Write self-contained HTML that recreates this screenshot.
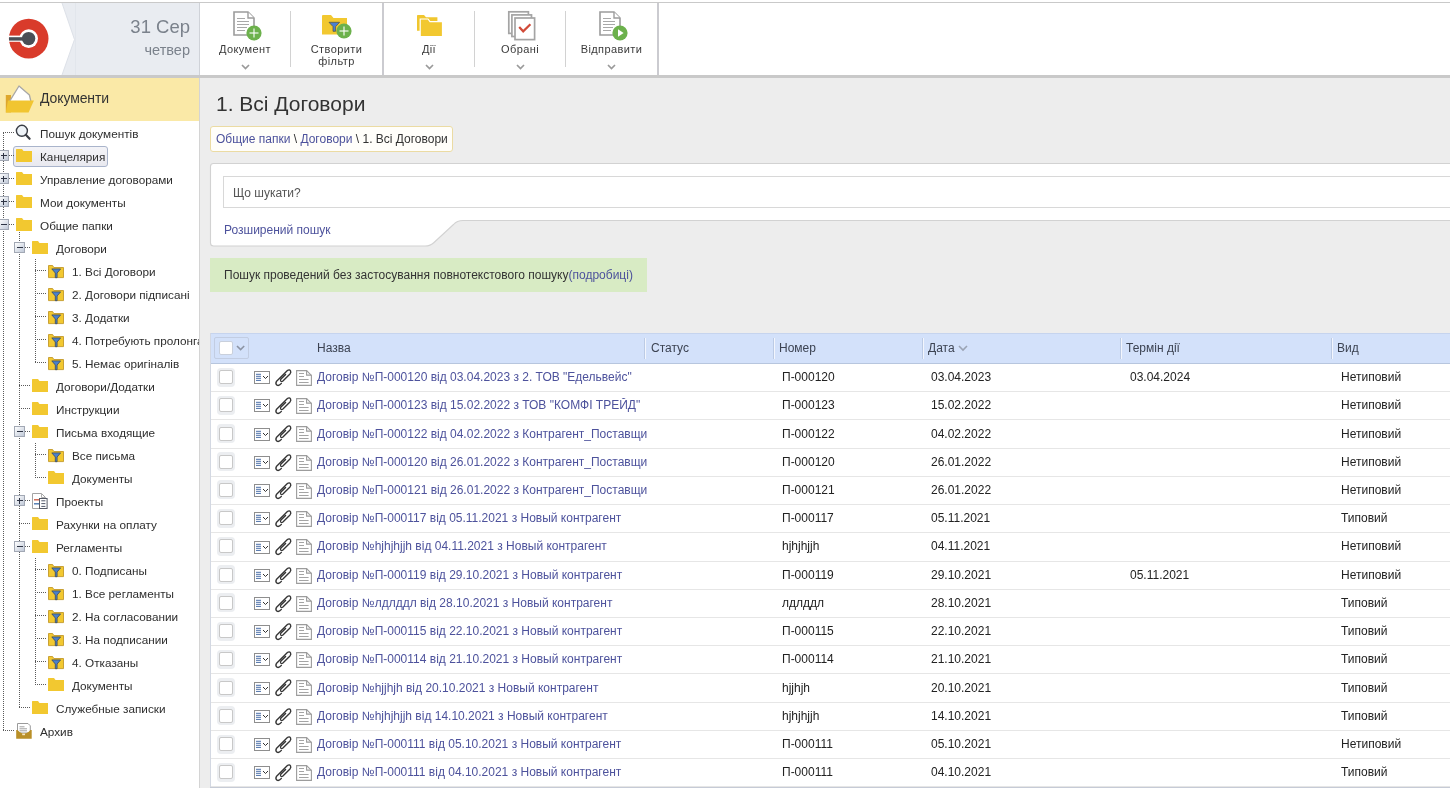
<!DOCTYPE html><html><head><meta charset="utf-8"><style>
*{box-sizing:border-box}
html,body{margin:0;padding:0}
body{width:1450px;height:788px;overflow:hidden;position:relative;background:#ededed;will-change:transform;font-family:"Liberation Sans",sans-serif;color:#333}
.a{position:absolute}
svg{position:absolute;overflow:visible}
.tb{position:absolute;font-size:11px;color:#3a3a3a;text-align:center;white-space:nowrap;line-height:12px;letter-spacing:0.4px}
.ti{position:absolute;font-size:11.75px;color:#2e2e2e;white-space:nowrap;line-height:14px}
.dv{position:absolute;width:1px;background-image:linear-gradient(#5a5a5a 50%,transparent 50%);background-size:1px 2px}
.dh{position:absolute;height:1px;background-image:linear-gradient(90deg,#5a5a5a 50%,transparent 50%);background-size:2px 1px}
.exp{position:absolute;width:11px;height:11px;border:1px solid #a2a8b4;background:linear-gradient(135deg,#ffffff,#c0c9d8);}
.exp:before{content:"";position:absolute;left:1.5px;top:3.8px;width:6px;height:1.4px;background:#2e3444}
.exp.p:after{content:"";position:absolute;left:3.8px;top:1.5px;width:1.4px;height:6px;background:#2e3444}

.c{position:absolute;font-size:12px;color:#222;white-space:nowrap;line-height:14px}
.hc{position:absolute;top:341px;font-size:12px;color:#3c4352;white-space:nowrap;line-height:14px}
.hs{position:absolute;top:338px;width:2px;height:21px;border-left:1px solid #bccbe5;border-right:1px solid #f3f6fd}
.link{color:#4d529c !important}
.rl{position:absolute;left:211px;width:1239px;height:1px;background:#e6e6e6}
</style></head><body>
<div class="a" style="left:0;top:0;width:1450px;height:78px;background:#fff"></div>
<div class="a" style="left:0;top:2px;width:1450px;height:1px;background:#c9c9c9"></div>
<svg style="left:0;top:3px" width="200" height="72"><polygon points="62,0 199,0 199,72 62,72 74.5,36.5" fill="#e9ecf1"/><polyline points="62,0 74.5,36.5 62,72" fill="none" stroke="#dde1e8" stroke-width="1"/><line x1="75.5" y1="0" x2="75.5" y2="72" stroke="#e2e6ec" stroke-width="1"/></svg>
<div class="a" style="left:199px;top:3px;width:1px;height:72px;background:#cfd2d8"></div>
<div class="a" style="right:1260px;top:17px;font-size:18.5px;line-height:20px;color:#7b828c;white-space:nowrap">31 Сер</div>
<div class="a" style="right:1260px;top:42px;font-size:14.5px;line-height:16px;color:#7b828c;white-space:nowrap">четвер</div>
<svg style="left:0;top:14px" width="56" height="50"><circle cx="28.7" cy="24.6" r="19.8" fill="#d93b2b"/><circle cx="28.7" cy="24.6" r="9.3" fill="#fff"/><rect x="9" y="21.6" width="13" height="6.2" fill="#fff"/><rect x="9" y="23.2" width="15" height="3.4" fill="#4b4f56"/><circle cx="28.6" cy="24.6" r="6.7" fill="#4b4f56"/></svg>
<div class="a" style="left:290px;top:11px;width:1px;height:56px;background:#d2d2d2"></div>
<div class="a" style="left:474px;top:11px;width:1px;height:56px;background:#d2d2d2"></div>
<div class="a" style="left:565px;top:11px;width:1px;height:56px;background:#d2d2d2"></div>
<div class="a" style="left:382px;top:3px;width:2px;height:72px;background:#cbcbd0"></div>
<div class="a" style="left:657px;top:3px;width:2px;height:72px;background:#cbcbd0"></div>
<div class="a" style="left:0;top:75px;width:1450px;height:3px;background:#c9c9c9"></div>
<svg style="left:233px;top:10.5px" width="24" height="26"><path d="M1,1 H15 L21,7 V24 H1 Z" fill="#fff" stroke="#9c9c9c" stroke-width="1.6" stroke-linejoin="miter"/><path d="M15,1 V7 H21" fill="#fff" stroke="#9c9c9c" stroke-width="1.4"/><line x1="4" y1="7.5" x2="12" y2="7.5" stroke="#a8a8a8" stroke-width="1"/><line x1="4" y1="10.5" x2="16" y2="10.5" stroke="#a8a8a8" stroke-width="1"/><line x1="4" y1="13.5" x2="16" y2="13.5" stroke="#a8a8a8" stroke-width="1"/><line x1="4" y1="16.5" x2="14" y2="16.5" stroke="#a8a8a8" stroke-width="1"/><line x1="4" y1="19.5" x2="12" y2="19.5" stroke="#a8a8a8" stroke-width="1"/></svg>
<svg style="left:246.4px;top:25.2px" width="16" height="16"><circle cx="8" cy="8" r="7.6" fill="#6cb14c"/><line x1="8" y1="3.5" x2="8" y2="12.5" stroke="#fff" stroke-width="1.1"/><line x1="3.5" y1="8" x2="12.5" y2="8" stroke="#fff" stroke-width="1.1"/></svg>
<div class="tb" style="left:200px;width:90px;top:43.2px">Документ</div>
<svg style="left:241px;top:63.7px" width="10" height="6"><polyline points="1,1 4.5,4.5 8,1" fill="none" stroke="#9a9a9a" stroke-width="1.7"/></svg>
<svg style="left:322px;top:15px" width="26" height="20"><path d="M0,1 Q0,0 1,0 H9 L11.5,3 H25 V19.6 H0 Z" fill="#f2c830"/><path d="M7,7.3 H17.6 L13.6,11.6 V16.3 L11,16.3 V11.6 Z" fill="#4a7fd2" stroke="#5a5a40" stroke-width="0.8"/></svg>
<svg style="left:336.4px;top:23.1px" width="16" height="16"><circle cx="8" cy="8" r="7.6" fill="#6cb14c"/><line x1="8" y1="3.5" x2="8" y2="12.5" stroke="#fff" stroke-width="1.1"/><line x1="3.5" y1="8" x2="12.5" y2="8" stroke="#fff" stroke-width="1.1"/></svg>
<div class="tb" style="left:291px;width:91px;top:43.2px">Створити<br>фільтр</div>
<svg style="left:417px;top:15px" width="26" height="22"><path d="M0,0.5 Q0,0 1,0 H7 L9,2.2 H20.4 V15.8 H0 Z" fill="#f0c62e"/><path d="M3.2,4 H11 L13,6.6 H25.5 V21.6 H3.2 Z" fill="#f2c830" stroke="#fff" stroke-width="1.2"/></svg>
<div class="tb" style="left:384px;width:90px;top:43.2px">Дії</div>
<svg style="left:424.5px;top:63.7px" width="10" height="6"><polyline points="1,1 4.5,4.5 8,1" fill="none" stroke="#9a9a9a" stroke-width="1.7"/></svg>
<svg style="left:507px;top:10px" width="30" height="31"><rect x="1.8" y="1.8" width="19.6" height="21.6" fill="#fff" stroke="#a4a4a4" stroke-width="1.7"/><rect x="4.9" y="4.9" width="19.6" height="21.6" fill="#fff" stroke="#a4a4a4" stroke-width="1.7"/><rect x="8" y="8" width="19.6" height="21.6" fill="#fff" stroke="#a4a4a4" stroke-width="1.7"/><polyline points="12.2,17 16.2,21.3 23.4,14.2" fill="none" stroke="#d14a38" stroke-width="2.2"/></svg>
<div class="tb" style="left:475px;width:90px;top:43.2px">Обрані</div>
<svg style="left:515.5px;top:63.7px" width="10" height="6"><polyline points="1,1 4.5,4.5 8,1" fill="none" stroke="#9a9a9a" stroke-width="1.7"/></svg>
<svg style="left:599px;top:10.5px" width="24" height="26"><path d="M1,1 H15 L21,7 V24 H1 Z" fill="#fff" stroke="#9c9c9c" stroke-width="1.6" stroke-linejoin="miter"/><path d="M15,1 V7 H21" fill="#fff" stroke="#9c9c9c" stroke-width="1.4"/><line x1="4" y1="7.5" x2="12" y2="7.5" stroke="#a8a8a8" stroke-width="1"/><line x1="4" y1="10.5" x2="16" y2="10.5" stroke="#a8a8a8" stroke-width="1"/><line x1="4" y1="13.5" x2="16" y2="13.5" stroke="#a8a8a8" stroke-width="1"/><line x1="4" y1="16.5" x2="14" y2="16.5" stroke="#a8a8a8" stroke-width="1"/><line x1="4" y1="19.5" x2="12" y2="19.5" stroke="#a8a8a8" stroke-width="1"/></svg>
<svg style="left:612.2px;top:25.2px" width="16" height="16"><circle cx="8" cy="8" r="7.6" fill="#6cb14c"/><polygon points="6,4.2 11.6,8 6,11.8" fill="#fff"/></svg>
<div class="tb" style="left:566px;width:91px;top:43.2px">Відправити</div>
<svg style="left:606.5px;top:63.7px" width="10" height="6"><polyline points="1,1 4.5,4.5 8,1" fill="none" stroke="#9a9a9a" stroke-width="1.7"/></svg>
<div class="a" style="left:0;top:78px;width:199px;height:710px;background:#fff"></div>
<div class="a" style="left:199px;top:78px;width:1px;height:710px;background:#d4d4d4"></div>
<div class="a" style="left:0;top:78px;width:199px;height:43px;background:#fae9a7"></div>
<svg style="left:0;top:78px" width="40" height="43"><path d="M5.8,17 H11 V34.4 H5.8 Z" fill="#dea72c"/><path d="M8.3,25.3 L19,8 L29.4,17 L30.8,23 L28,30 L9,30 Z" fill="#fff" stroke="#a7a7a7" stroke-width="1.3" stroke-linejoin="round"/><path d="M7.9,22.4 H33.9 L28.6,34.4 H5.8 Z" fill="#f1c531"/></svg>
<div class="a" style="left:40px;top:90px;font-size:14px;line-height:16px;color:#333;white-space:nowrap;letter-spacing:-0.1px">Документи</div>
<div class="a" style="left:0;top:121px;width:199px;height:667px;overflow:hidden">
<div class="dv" style="left:3px;top:12px;height:598px"></div>
<div class="dv" style="left:19px;top:109px;height:478px"></div>
<div class="dv" style="left:35px;top:138px;height:104px"></div>
<div class="dv" style="left:35px;top:322px;height:35px"></div>
<div class="dv" style="left:35px;top:437px;height:127px"></div>
<div class="a" style="left:13px;top:25px;width:95px;height:21px;border:1px solid #a9b4cb;border-radius:3px;background:linear-gradient(#f3f3f7,#e9e9ef)"></div>
<div class="dh" style="left:3px;top:11px;width:11px"></div>
<svg style="left:15px;top:3px" width="18" height="18"><circle cx="6.9" cy="6.8" r="5.5" fill="#eef3f8" stroke="#3a3e46" stroke-width="1.4"/><line x1="10.8" y1="10.8" x2="14.6" y2="14.8" stroke="#3a3e46" stroke-width="2.2" stroke-linecap="round"/></svg>
<div class="ti" style="left:40px;top:5.8px">Пошук документів</div>
<div class="dh" style="left:3px;top:34px;width:11px"></div>
<svg style="left:16px;top:28px" width="17" height="14"><path d="M0,0.6 Q0,0 0.6,0 H6 L7.5,2 H16 V13 H0 Z" fill="#f2c830"/></svg>
<div class="exp p" style="left:-2px;top:29px"></div>
<div class="ti" style="left:40px;top:28.8px">Канцелярия</div>
<div class="dh" style="left:3px;top:57px;width:11px"></div>
<svg style="left:16px;top:51px" width="17" height="14"><path d="M0,0.6 Q0,0 0.6,0 H6 L7.5,2 H16 V13 H0 Z" fill="#f2c830"/></svg>
<div class="exp p" style="left:-2px;top:52px"></div>
<div class="ti" style="left:40px;top:51.8px">Управление договорами</div>
<div class="dh" style="left:3px;top:80px;width:11px"></div>
<svg style="left:16px;top:74px" width="17" height="14"><path d="M0,0.6 Q0,0 0.6,0 H6 L7.5,2 H16 V13 H0 Z" fill="#f2c830"/></svg>
<div class="exp p" style="left:-2px;top:75px"></div>
<div class="ti" style="left:40px;top:74.8px">Мои документы</div>
<div class="dh" style="left:3px;top:103px;width:11px"></div>
<svg style="left:16px;top:97px" width="17" height="14"><path d="M0,0.6 Q0,0 0.6,0 H6 L7.5,2 H16 V13 H0 Z" fill="#f2c830"/></svg>
<div class="exp m" style="left:-2px;top:98px"></div>
<div class="ti" style="left:40px;top:97.8px">Общие папки</div>
<div class="dh" style="left:19px;top:126px;width:11px"></div>
<svg style="left:32px;top:120px" width="17" height="14"><path d="M0,0.6 Q0,0 0.6,0 H6 L7.5,2 H16 V13 H0 Z" fill="#f2c830"/></svg>
<div class="exp m" style="left:14px;top:121px"></div>
<div class="ti" style="left:56px;top:120.8px">Договори</div>
<div class="dh" style="left:35px;top:149px;width:11px"></div>
<svg style="left:48px;top:143.5px" width="17" height="14"><path d="M0.5,0.5 H4.6 L5.8,2.5 H15.5 V12.6 H0.5 Z" fill="#f2c830" stroke="#c39a2a" stroke-width="0.9"/><path d="M3.8,3.9 H12.6 L9.1,8 V12.7 H7.3 V8 Z" fill="#4a80cc" stroke="#3c4a5a" stroke-width="0.8" stroke-linejoin="round"/></svg>
<div class="ti" style="left:72px;top:143.8px">1. Всі Договори</div>
<div class="dh" style="left:35px;top:172px;width:11px"></div>
<svg style="left:48px;top:166.5px" width="17" height="14"><path d="M0.5,0.5 H4.6 L5.8,2.5 H15.5 V12.6 H0.5 Z" fill="#f2c830" stroke="#c39a2a" stroke-width="0.9"/><path d="M3.8,3.9 H12.6 L9.1,8 V12.7 H7.3 V8 Z" fill="#4a80cc" stroke="#3c4a5a" stroke-width="0.8" stroke-linejoin="round"/></svg>
<div class="ti" style="left:72px;top:166.8px">2. Договори підписані</div>
<div class="dh" style="left:35px;top:195px;width:11px"></div>
<svg style="left:48px;top:189.5px" width="17" height="14"><path d="M0.5,0.5 H4.6 L5.8,2.5 H15.5 V12.6 H0.5 Z" fill="#f2c830" stroke="#c39a2a" stroke-width="0.9"/><path d="M3.8,3.9 H12.6 L9.1,8 V12.7 H7.3 V8 Z" fill="#4a80cc" stroke="#3c4a5a" stroke-width="0.8" stroke-linejoin="round"/></svg>
<div class="ti" style="left:72px;top:189.8px">3. Додатки</div>
<div class="dh" style="left:35px;top:218px;width:11px"></div>
<svg style="left:48px;top:212.5px" width="17" height="14"><path d="M0.5,0.5 H4.6 L5.8,2.5 H15.5 V12.6 H0.5 Z" fill="#f2c830" stroke="#c39a2a" stroke-width="0.9"/><path d="M3.8,3.9 H12.6 L9.1,8 V12.7 H7.3 V8 Z" fill="#4a80cc" stroke="#3c4a5a" stroke-width="0.8" stroke-linejoin="round"/></svg>
<div class="ti" style="left:72px;top:212.8px">4. Потребують пролонгації</div>
<div class="dh" style="left:35px;top:241px;width:11px"></div>
<svg style="left:48px;top:235.5px" width="17" height="14"><path d="M0.5,0.5 H4.6 L5.8,2.5 H15.5 V12.6 H0.5 Z" fill="#f2c830" stroke="#c39a2a" stroke-width="0.9"/><path d="M3.8,3.9 H12.6 L9.1,8 V12.7 H7.3 V8 Z" fill="#4a80cc" stroke="#3c4a5a" stroke-width="0.8" stroke-linejoin="round"/></svg>
<div class="ti" style="left:72px;top:235.8px">5. Немає оригіналів</div>
<div class="dh" style="left:19px;top:264px;width:11px"></div>
<svg style="left:32px;top:258px" width="17" height="14"><path d="M0,0.6 Q0,0 0.6,0 H6 L7.5,2 H16 V13 H0 Z" fill="#f2c830"/></svg>
<div class="ti" style="left:56px;top:258.8px">Договори/Додатки</div>
<div class="dh" style="left:19px;top:287px;width:11px"></div>
<svg style="left:32px;top:281px" width="17" height="14"><path d="M0,0.6 Q0,0 0.6,0 H6 L7.5,2 H16 V13 H0 Z" fill="#f2c830"/></svg>
<div class="ti" style="left:56px;top:281.8px">Инструкции</div>
<div class="dh" style="left:19px;top:310px;width:11px"></div>
<svg style="left:32px;top:304px" width="17" height="14"><path d="M0,0.6 Q0,0 0.6,0 H6 L7.5,2 H16 V13 H0 Z" fill="#f2c830"/></svg>
<div class="exp m" style="left:14px;top:305px"></div>
<div class="ti" style="left:56px;top:304.8px">Письма входящие</div>
<div class="dh" style="left:35px;top:333px;width:11px"></div>
<svg style="left:48px;top:327.5px" width="17" height="14"><path d="M0.5,0.5 H4.6 L5.8,2.5 H15.5 V12.6 H0.5 Z" fill="#f2c830" stroke="#c39a2a" stroke-width="0.9"/><path d="M3.8,3.9 H12.6 L9.1,8 V12.7 H7.3 V8 Z" fill="#4a80cc" stroke="#3c4a5a" stroke-width="0.8" stroke-linejoin="round"/></svg>
<div class="ti" style="left:72px;top:327.8px">Все письма</div>
<div class="dh" style="left:35px;top:356px;width:11px"></div>
<svg style="left:48px;top:350px" width="17" height="14"><path d="M0,0.6 Q0,0 0.6,0 H6 L7.5,2 H16 V13 H0 Z" fill="#f2c830"/></svg>
<div class="ti" style="left:72px;top:350.8px">Документы</div>
<div class="dh" style="left:19px;top:379px;width:11px"></div>
<svg style="left:32px;top:372px" width="17" height="17"><path d="M0.5,0.5 H9.5 L13.5,4.5 V15.5 H0.5 Z" fill="#fff" stroke="#a4a4a4" stroke-width="1"/><path d="M9.5,0.5 V4.5 H13.5" fill="none" stroke="#b0b0b0"/><line x1="2" y1="6.8" x2="7" y2="6.8" stroke="#d0604a" stroke-width="1.4"/><line x1="2" y1="10.8" x2="7" y2="10.8" stroke="#4a78b0" stroke-width="1.4"/><rect x="7.5" y="5.5" width="7.6" height="10" fill="#fff" stroke="#555a66" stroke-width="1"/><line x1="9.3" y1="7.8" x2="13.4" y2="7.8" stroke="#505868"/><line x1="9.3" y1="10.6" x2="13.4" y2="10.6" stroke="#505868"/><line x1="9.3" y1="13.4" x2="13.4" y2="13.4" stroke="#505868"/></svg>
<div class="exp p" style="left:14px;top:374px"></div>
<div class="ti" style="left:56px;top:373.8px">Проекты</div>
<div class="dh" style="left:19px;top:402px;width:11px"></div>
<svg style="left:32px;top:396px" width="17" height="14"><path d="M0,0.6 Q0,0 0.6,0 H6 L7.5,2 H16 V13 H0 Z" fill="#f2c830"/></svg>
<div class="ti" style="left:56px;top:396.8px">Рахунки на оплату</div>
<div class="dh" style="left:19px;top:425px;width:11px"></div>
<svg style="left:32px;top:419px" width="17" height="14"><path d="M0,0.6 Q0,0 0.6,0 H6 L7.5,2 H16 V13 H0 Z" fill="#f2c830"/></svg>
<div class="exp m" style="left:14px;top:420px"></div>
<div class="ti" style="left:56px;top:419.8px">Регламенты</div>
<div class="dh" style="left:35px;top:448px;width:11px"></div>
<svg style="left:48px;top:442.5px" width="17" height="14"><path d="M0.5,0.5 H4.6 L5.8,2.5 H15.5 V12.6 H0.5 Z" fill="#f2c830" stroke="#c39a2a" stroke-width="0.9"/><path d="M3.8,3.9 H12.6 L9.1,8 V12.7 H7.3 V8 Z" fill="#4a80cc" stroke="#3c4a5a" stroke-width="0.8" stroke-linejoin="round"/></svg>
<div class="ti" style="left:72px;top:442.8px">0. Подписаны</div>
<div class="dh" style="left:35px;top:471px;width:11px"></div>
<svg style="left:48px;top:465.5px" width="17" height="14"><path d="M0.5,0.5 H4.6 L5.8,2.5 H15.5 V12.6 H0.5 Z" fill="#f2c830" stroke="#c39a2a" stroke-width="0.9"/><path d="M3.8,3.9 H12.6 L9.1,8 V12.7 H7.3 V8 Z" fill="#4a80cc" stroke="#3c4a5a" stroke-width="0.8" stroke-linejoin="round"/></svg>
<div class="ti" style="left:72px;top:465.8px">1. Все регламенты</div>
<div class="dh" style="left:35px;top:494px;width:11px"></div>
<svg style="left:48px;top:488.5px" width="17" height="14"><path d="M0.5,0.5 H4.6 L5.8,2.5 H15.5 V12.6 H0.5 Z" fill="#f2c830" stroke="#c39a2a" stroke-width="0.9"/><path d="M3.8,3.9 H12.6 L9.1,8 V12.7 H7.3 V8 Z" fill="#4a80cc" stroke="#3c4a5a" stroke-width="0.8" stroke-linejoin="round"/></svg>
<div class="ti" style="left:72px;top:488.8px">2. На согласовании</div>
<div class="dh" style="left:35px;top:517px;width:11px"></div>
<svg style="left:48px;top:511.5px" width="17" height="14"><path d="M0.5,0.5 H4.6 L5.8,2.5 H15.5 V12.6 H0.5 Z" fill="#f2c830" stroke="#c39a2a" stroke-width="0.9"/><path d="M3.8,3.9 H12.6 L9.1,8 V12.7 H7.3 V8 Z" fill="#4a80cc" stroke="#3c4a5a" stroke-width="0.8" stroke-linejoin="round"/></svg>
<div class="ti" style="left:72px;top:511.8px">3. На подписании</div>
<div class="dh" style="left:35px;top:540px;width:11px"></div>
<svg style="left:48px;top:534.5px" width="17" height="14"><path d="M0.5,0.5 H4.6 L5.8,2.5 H15.5 V12.6 H0.5 Z" fill="#f2c830" stroke="#c39a2a" stroke-width="0.9"/><path d="M3.8,3.9 H12.6 L9.1,8 V12.7 H7.3 V8 Z" fill="#4a80cc" stroke="#3c4a5a" stroke-width="0.8" stroke-linejoin="round"/></svg>
<div class="ti" style="left:72px;top:534.8px">4. Отказаны</div>
<div class="dh" style="left:35px;top:563px;width:11px"></div>
<svg style="left:48px;top:557px" width="17" height="14"><path d="M0,0.6 Q0,0 0.6,0 H6 L7.5,2 H16 V13 H0 Z" fill="#f2c830"/></svg>
<div class="ti" style="left:72px;top:557.8px">Документы</div>
<div class="dh" style="left:19px;top:586px;width:11px"></div>
<svg style="left:32px;top:580px" width="17" height="14"><path d="M0,0.6 Q0,0 0.6,0 H6 L7.5,2 H16 V13 H0 Z" fill="#f2c830"/></svg>
<div class="ti" style="left:56px;top:580.8px">Служебные записки</div>
<div class="dh" style="left:3px;top:609px;width:11px"></div>
<svg style="left:16px;top:602px" width="17" height="17"><path d="M1.5,0.5 H12 L14.3,2.8 V10 H1.5 Z" fill="#fff" stroke="#9a9a9a" stroke-width="1"/><line x1="3.5" y1="3.8" x2="8.5" y2="3.8" stroke="#a0a0a0"/><line x1="3.5" y1="5.8" x2="11" y2="5.8" stroke="#a0a0a0"/><line x1="3.5" y1="7.8" x2="11" y2="7.8" stroke="#a0a0a0"/><path d="M0.2,6.9 H1.6 Q4,10 6,10.2 H10 Q12,10 14.4,6.9 H15.7 V15.7 H0.2 Z" fill="#b98f27"/><rect x="6.2" y="10.6" width="2.8" height="1.6" fill="#f5e7c0"/></svg>
<div class="ti" style="left:40px;top:603.8px">Архив</div>
</div>
<div class="a" style="left:216px;top:92px;font-size:21px;line-height:24px;color:#333;white-space:nowrap">1. Всі Договори</div>
<div class="a" style="left:210px;top:126px;width:243px;height:26px;background:#fffefa;border:1px solid #ebdba3;border-radius:3px;font-size:12px;line-height:14px;white-space:nowrap;padding:5px 0 0 5px;color:#333"><span class="link">Общие папки</span> \ <span class="link">Договори</span> \ 1. Всі Договори</div>
<svg style="left:210px;top:163px" width="1240" height="84"><path d="M0.5,3.5 Q0.5,0.5 3.5,0.5 H1250 V57.5 H253 Q247,57.5 243.5,61.5 L224,79.5 Q220.5,83 215,83 H3.5 Q0.5,83 0.5,80 Z" fill="#fff" stroke="#d2d2d2" stroke-width="1.1"/></svg>
<div class="a" style="left:223px;top:176px;width:1227px;height:32px;background:#fff;border:1px solid #d8d8d8;border-right:none;width:1240px"></div>
<div class="a" style="left:233px;top:186px;font-size:12px;line-height:14px;color:#555;white-space:nowrap">Що шукати?</div>
<div class="a" style="left:224px;top:223px;font-size:12px;line-height:14px;white-space:nowrap" ><span class="link">Розширений пошук</span></div>
<div class="a" style="left:210px;top:258px;width:437px;height:34px;background:#d8ebc4;font-size:12px;line-height:14px;white-space:nowrap;padding:10px 0 0 14px;color:#333">Пошук проведений без застосування повнотекстового пошуку<span class="link">(подробиці)</span></div>
<div class="a" style="left:210px;top:333px;width:1240px;height:455px;background:#fff;border-left:1px solid #d3d8e2"></div>
<div class="a" style="left:210px;top:787px;width:1240px;height:1px;background:#c6cbd6"></div>
<div class="a" style="left:211px;top:333px;width:1239px;height:31px;background:#d3e1fa;border-top:1px solid #c6d4ee;border-bottom:1px solid #b7c6de"></div>
<div class="a" style="left:214px;top:337px;width:35px;height:22px;border:1px solid #c2cde2;border-radius:2px;background:#d3e1fa"></div>
<div class="a" style="left:219px;top:341px;width:14px;height:14px;background:#fff;border-radius:2px;border:1px solid #c9d0dc"></div>
<svg style="left:236px;top:345px" width="10" height="6"><polyline points="1,1 4.6,4.6 8.2,1" fill="none" stroke="#8c94a4" stroke-width="1.6"/></svg>
<div class="hs" style="left:644px"></div>
<div class="hs" style="left:773px"></div>
<div class="hs" style="left:922px"></div>
<div class="hs" style="left:1120px"></div>
<div class="hs" style="left:1331px"></div>
<div class="hc" style="left:317px">Назва</div>
<div class="hc" style="left:651px">Статус</div>
<div class="hc" style="left:779px">Номер</div>
<div class="hc" style="left:928px">Дата</div>
<div class="hc" style="left:1126px">Термін дії</div>
<div class="hc" style="left:1337px">Вид</div>
<svg style="left:958px;top:345px" width="10" height="6"><polyline points="1,1 5,5 9,1" fill="none" stroke="#9aa3b3" stroke-width="1.6"/></svg>
<div class="rl" style="top:391.18px"></div>
<div class="a" style="left:217px;top:367.56px;width:18px;height:19px;border-radius:4px;background:#eceef1"></div>
<div class="a" style="left:219px;top:370.06px;width:14px;height:14px;border-radius:2px;background:#fff;border:1px solid #c8c8c8"></div>
<svg style="left:254px;top:371.15px" width="16" height="13"><rect x="0.5" y="0.5" width="15" height="12" fill="#fff" stroke="#8e8e8e" stroke-width="1"/><line x1="2" y1="3.3" x2="7" y2="3.3" stroke="#4a6fa8" stroke-width="1"/><line x1="2" y1="5.3" x2="7" y2="5.3" stroke="#4a6fa8" stroke-width="1"/><line x1="2" y1="7.3" x2="7" y2="7.3" stroke="#4a6fa8" stroke-width="1"/><line x1="2" y1="9.4" x2="7" y2="9.4" stroke="#4a6fa8" stroke-width="1"/><polyline points="9,5 11.5,7.5 14,5" fill="none" stroke="#333" stroke-width="1"/></svg>
<svg style="left:272px;top:365.95px" width="22" height="22"><path d="M9.4,17.4 Q7,20.2 5,19.2 Q3,17.8 4.6,15.2 L15.4,4.6 Q17.3,3 18.5,4.8 Q19.3,6.4 18,7.9 L10.9,15 Q9.5,16.2 8.7,15 Q8.2,13.9 9,13 L13.6,8.4" fill="none" stroke="#353535" stroke-width="1.35" stroke-linecap="round" stroke-linejoin="round"/></svg>
<svg style="left:296px;top:369.95px" width="17" height="17"><path d="M0.6,0.6 H10.6 L15.4,5.4 V15.4 H0.6 Z" fill="#fff" stroke="#9c9c9c" stroke-width="1.1"/><path d="M10.6,0.6 V5.1 H15.4" fill="none" stroke="#9c9c9c" stroke-width="1.1"/><line x1="3" y1="3.5" x2="8" y2="3.5" stroke="#a4a4a4"/><line x1="3" y1="6.5" x2="8" y2="6.5" stroke="#a4a4a4"/><line x1="3" y1="9.5" x2="12.6" y2="9.5" stroke="#a4a4a4"/><line x1="3" y1="12.5" x2="12.6" y2="12.5" stroke="#a4a4a4"/></svg>
<div class="c link" style="left:317px;top:370.06px;width:330px;overflow:hidden">Договір №П-000120 від 03.04.2023 з 2. ТОВ "Едельвейс"</div>
<div class="c" style="left:782px;top:370.06px">П-000120</div>
<div class="c" style="left:931px;top:370.06px">03.04.2023</div>
<div class="c" style="left:1130px;top:370.06px">03.04.2024</div>
<div class="c" style="left:1341px;top:370.06px">Нетиповий</div>
<div class="rl" style="top:419.41px"></div>
<div class="a" style="left:217px;top:395.80px;width:18px;height:19px;border-radius:4px;background:#eceef1"></div>
<div class="a" style="left:219px;top:398.30px;width:14px;height:14px;border-radius:2px;background:#fff;border:1px solid #c8c8c8"></div>
<svg style="left:254px;top:399.38px" width="16" height="13"><rect x="0.5" y="0.5" width="15" height="12" fill="#fff" stroke="#8e8e8e" stroke-width="1"/><line x1="2" y1="3.3" x2="7" y2="3.3" stroke="#4a6fa8" stroke-width="1"/><line x1="2" y1="5.3" x2="7" y2="5.3" stroke="#4a6fa8" stroke-width="1"/><line x1="2" y1="7.3" x2="7" y2="7.3" stroke="#4a6fa8" stroke-width="1"/><line x1="2" y1="9.4" x2="7" y2="9.4" stroke="#4a6fa8" stroke-width="1"/><polyline points="9,5 11.5,7.5 14,5" fill="none" stroke="#333" stroke-width="1"/></svg>
<svg style="left:272px;top:394.18px" width="22" height="22"><path d="M9.4,17.4 Q7,20.2 5,19.2 Q3,17.8 4.6,15.2 L15.4,4.6 Q17.3,3 18.5,4.8 Q19.3,6.4 18,7.9 L10.9,15 Q9.5,16.2 8.7,15 Q8.2,13.9 9,13 L13.6,8.4" fill="none" stroke="#353535" stroke-width="1.35" stroke-linecap="round" stroke-linejoin="round"/></svg>
<svg style="left:296px;top:398.18px" width="17" height="17"><path d="M0.6,0.6 H10.6 L15.4,5.4 V15.4 H0.6 Z" fill="#fff" stroke="#9c9c9c" stroke-width="1.1"/><path d="M10.6,0.6 V5.1 H15.4" fill="none" stroke="#9c9c9c" stroke-width="1.1"/><line x1="3" y1="3.5" x2="8" y2="3.5" stroke="#a4a4a4"/><line x1="3" y1="6.5" x2="8" y2="6.5" stroke="#a4a4a4"/><line x1="3" y1="9.5" x2="12.6" y2="9.5" stroke="#a4a4a4"/><line x1="3" y1="12.5" x2="12.6" y2="12.5" stroke="#a4a4a4"/></svg>
<div class="c link" style="left:317px;top:398.30px;width:330px;overflow:hidden">Договір №П-000123 від 15.02.2022 з ТОВ "КОМФІ ТРЕЙД"</div>
<div class="c" style="left:782px;top:398.30px">П-000123</div>
<div class="c" style="left:931px;top:398.30px">15.02.2022</div>
<div class="c" style="left:1341px;top:398.30px">Нетиповий</div>
<div class="rl" style="top:447.64px"></div>
<div class="a" style="left:217px;top:424.02px;width:18px;height:19px;border-radius:4px;background:#eceef1"></div>
<div class="a" style="left:219px;top:426.52px;width:14px;height:14px;border-radius:2px;background:#fff;border:1px solid #c8c8c8"></div>
<svg style="left:254px;top:427.61px" width="16" height="13"><rect x="0.5" y="0.5" width="15" height="12" fill="#fff" stroke="#8e8e8e" stroke-width="1"/><line x1="2" y1="3.3" x2="7" y2="3.3" stroke="#4a6fa8" stroke-width="1"/><line x1="2" y1="5.3" x2="7" y2="5.3" stroke="#4a6fa8" stroke-width="1"/><line x1="2" y1="7.3" x2="7" y2="7.3" stroke="#4a6fa8" stroke-width="1"/><line x1="2" y1="9.4" x2="7" y2="9.4" stroke="#4a6fa8" stroke-width="1"/><polyline points="9,5 11.5,7.5 14,5" fill="none" stroke="#333" stroke-width="1"/></svg>
<svg style="left:272px;top:422.41px" width="22" height="22"><path d="M9.4,17.4 Q7,20.2 5,19.2 Q3,17.8 4.6,15.2 L15.4,4.6 Q17.3,3 18.5,4.8 Q19.3,6.4 18,7.9 L10.9,15 Q9.5,16.2 8.7,15 Q8.2,13.9 9,13 L13.6,8.4" fill="none" stroke="#353535" stroke-width="1.35" stroke-linecap="round" stroke-linejoin="round"/></svg>
<svg style="left:296px;top:426.41px" width="17" height="17"><path d="M0.6,0.6 H10.6 L15.4,5.4 V15.4 H0.6 Z" fill="#fff" stroke="#9c9c9c" stroke-width="1.1"/><path d="M10.6,0.6 V5.1 H15.4" fill="none" stroke="#9c9c9c" stroke-width="1.1"/><line x1="3" y1="3.5" x2="8" y2="3.5" stroke="#a4a4a4"/><line x1="3" y1="6.5" x2="8" y2="6.5" stroke="#a4a4a4"/><line x1="3" y1="9.5" x2="12.6" y2="9.5" stroke="#a4a4a4"/><line x1="3" y1="12.5" x2="12.6" y2="12.5" stroke="#a4a4a4"/></svg>
<div class="c link" style="left:317px;top:426.52px;width:330px;overflow:hidden">Договір №П-000122 від 04.02.2022 з Контрагент_Поставщик</div>
<div class="c" style="left:782px;top:426.52px">П-000122</div>
<div class="c" style="left:931px;top:426.52px">04.02.2022</div>
<div class="c" style="left:1341px;top:426.52px">Нетиповий</div>
<div class="rl" style="top:475.87px"></div>
<div class="a" style="left:217px;top:452.25px;width:18px;height:19px;border-radius:4px;background:#eceef1"></div>
<div class="a" style="left:219px;top:454.75px;width:14px;height:14px;border-radius:2px;background:#fff;border:1px solid #c8c8c8"></div>
<svg style="left:254px;top:455.84px" width="16" height="13"><rect x="0.5" y="0.5" width="15" height="12" fill="#fff" stroke="#8e8e8e" stroke-width="1"/><line x1="2" y1="3.3" x2="7" y2="3.3" stroke="#4a6fa8" stroke-width="1"/><line x1="2" y1="5.3" x2="7" y2="5.3" stroke="#4a6fa8" stroke-width="1"/><line x1="2" y1="7.3" x2="7" y2="7.3" stroke="#4a6fa8" stroke-width="1"/><line x1="2" y1="9.4" x2="7" y2="9.4" stroke="#4a6fa8" stroke-width="1"/><polyline points="9,5 11.5,7.5 14,5" fill="none" stroke="#333" stroke-width="1"/></svg>
<svg style="left:272px;top:450.64px" width="22" height="22"><path d="M9.4,17.4 Q7,20.2 5,19.2 Q3,17.8 4.6,15.2 L15.4,4.6 Q17.3,3 18.5,4.8 Q19.3,6.4 18,7.9 L10.9,15 Q9.5,16.2 8.7,15 Q8.2,13.9 9,13 L13.6,8.4" fill="none" stroke="#353535" stroke-width="1.35" stroke-linecap="round" stroke-linejoin="round"/></svg>
<svg style="left:296px;top:454.64px" width="17" height="17"><path d="M0.6,0.6 H10.6 L15.4,5.4 V15.4 H0.6 Z" fill="#fff" stroke="#9c9c9c" stroke-width="1.1"/><path d="M10.6,0.6 V5.1 H15.4" fill="none" stroke="#9c9c9c" stroke-width="1.1"/><line x1="3" y1="3.5" x2="8" y2="3.5" stroke="#a4a4a4"/><line x1="3" y1="6.5" x2="8" y2="6.5" stroke="#a4a4a4"/><line x1="3" y1="9.5" x2="12.6" y2="9.5" stroke="#a4a4a4"/><line x1="3" y1="12.5" x2="12.6" y2="12.5" stroke="#a4a4a4"/></svg>
<div class="c link" style="left:317px;top:454.75px;width:330px;overflow:hidden">Договір №П-000120 від 26.01.2022 з Контрагент_Поставщик</div>
<div class="c" style="left:782px;top:454.75px">П-000120</div>
<div class="c" style="left:931px;top:454.75px">26.01.2022</div>
<div class="c" style="left:1341px;top:454.75px">Нетиповий</div>
<div class="rl" style="top:504.10px"></div>
<div class="a" style="left:217px;top:480.49px;width:18px;height:19px;border-radius:4px;background:#eceef1"></div>
<div class="a" style="left:219px;top:482.99px;width:14px;height:14px;border-radius:2px;background:#fff;border:1px solid #c8c8c8"></div>
<svg style="left:254px;top:484.07px" width="16" height="13"><rect x="0.5" y="0.5" width="15" height="12" fill="#fff" stroke="#8e8e8e" stroke-width="1"/><line x1="2" y1="3.3" x2="7" y2="3.3" stroke="#4a6fa8" stroke-width="1"/><line x1="2" y1="5.3" x2="7" y2="5.3" stroke="#4a6fa8" stroke-width="1"/><line x1="2" y1="7.3" x2="7" y2="7.3" stroke="#4a6fa8" stroke-width="1"/><line x1="2" y1="9.4" x2="7" y2="9.4" stroke="#4a6fa8" stroke-width="1"/><polyline points="9,5 11.5,7.5 14,5" fill="none" stroke="#333" stroke-width="1"/></svg>
<svg style="left:272px;top:478.87px" width="22" height="22"><path d="M9.4,17.4 Q7,20.2 5,19.2 Q3,17.8 4.6,15.2 L15.4,4.6 Q17.3,3 18.5,4.8 Q19.3,6.4 18,7.9 L10.9,15 Q9.5,16.2 8.7,15 Q8.2,13.9 9,13 L13.6,8.4" fill="none" stroke="#353535" stroke-width="1.35" stroke-linecap="round" stroke-linejoin="round"/></svg>
<svg style="left:296px;top:482.87px" width="17" height="17"><path d="M0.6,0.6 H10.6 L15.4,5.4 V15.4 H0.6 Z" fill="#fff" stroke="#9c9c9c" stroke-width="1.1"/><path d="M10.6,0.6 V5.1 H15.4" fill="none" stroke="#9c9c9c" stroke-width="1.1"/><line x1="3" y1="3.5" x2="8" y2="3.5" stroke="#a4a4a4"/><line x1="3" y1="6.5" x2="8" y2="6.5" stroke="#a4a4a4"/><line x1="3" y1="9.5" x2="12.6" y2="9.5" stroke="#a4a4a4"/><line x1="3" y1="12.5" x2="12.6" y2="12.5" stroke="#a4a4a4"/></svg>
<div class="c link" style="left:317px;top:482.99px;width:330px;overflow:hidden">Договір №П-000121 від 26.01.2022 з Контрагент_Поставщик</div>
<div class="c" style="left:782px;top:482.99px">П-000121</div>
<div class="c" style="left:931px;top:482.99px">26.01.2022</div>
<div class="c" style="left:1341px;top:482.99px">Нетиповий</div>
<div class="rl" style="top:532.33px"></div>
<div class="a" style="left:217px;top:508.72px;width:18px;height:19px;border-radius:4px;background:#eceef1"></div>
<div class="a" style="left:219px;top:511.22px;width:14px;height:14px;border-radius:2px;background:#fff;border:1px solid #c8c8c8"></div>
<svg style="left:254px;top:512.3px" width="16" height="13"><rect x="0.5" y="0.5" width="15" height="12" fill="#fff" stroke="#8e8e8e" stroke-width="1"/><line x1="2" y1="3.3" x2="7" y2="3.3" stroke="#4a6fa8" stroke-width="1"/><line x1="2" y1="5.3" x2="7" y2="5.3" stroke="#4a6fa8" stroke-width="1"/><line x1="2" y1="7.3" x2="7" y2="7.3" stroke="#4a6fa8" stroke-width="1"/><line x1="2" y1="9.4" x2="7" y2="9.4" stroke="#4a6fa8" stroke-width="1"/><polyline points="9,5 11.5,7.5 14,5" fill="none" stroke="#333" stroke-width="1"/></svg>
<svg style="left:272px;top:507.1px" width="22" height="22"><path d="M9.4,17.4 Q7,20.2 5,19.2 Q3,17.8 4.6,15.2 L15.4,4.6 Q17.3,3 18.5,4.8 Q19.3,6.4 18,7.9 L10.9,15 Q9.5,16.2 8.7,15 Q8.2,13.9 9,13 L13.6,8.4" fill="none" stroke="#353535" stroke-width="1.35" stroke-linecap="round" stroke-linejoin="round"/></svg>
<svg style="left:296px;top:511.1px" width="17" height="17"><path d="M0.6,0.6 H10.6 L15.4,5.4 V15.4 H0.6 Z" fill="#fff" stroke="#9c9c9c" stroke-width="1.1"/><path d="M10.6,0.6 V5.1 H15.4" fill="none" stroke="#9c9c9c" stroke-width="1.1"/><line x1="3" y1="3.5" x2="8" y2="3.5" stroke="#a4a4a4"/><line x1="3" y1="6.5" x2="8" y2="6.5" stroke="#a4a4a4"/><line x1="3" y1="9.5" x2="12.6" y2="9.5" stroke="#a4a4a4"/><line x1="3" y1="12.5" x2="12.6" y2="12.5" stroke="#a4a4a4"/></svg>
<div class="c link" style="left:317px;top:511.22px;width:330px;overflow:hidden">Договір №П-000117 від 05.11.2021 з Новый контрагент</div>
<div class="c" style="left:782px;top:511.22px">П-000117</div>
<div class="c" style="left:931px;top:511.22px">05.11.2021</div>
<div class="c" style="left:1341px;top:511.22px">Типовий</div>
<div class="rl" style="top:560.56px"></div>
<div class="a" style="left:217px;top:536.94px;width:18px;height:19px;border-radius:4px;background:#eceef1"></div>
<div class="a" style="left:219px;top:539.44px;width:14px;height:14px;border-radius:2px;background:#fff;border:1px solid #c8c8c8"></div>
<svg style="left:254px;top:540.53px" width="16" height="13"><rect x="0.5" y="0.5" width="15" height="12" fill="#fff" stroke="#8e8e8e" stroke-width="1"/><line x1="2" y1="3.3" x2="7" y2="3.3" stroke="#4a6fa8" stroke-width="1"/><line x1="2" y1="5.3" x2="7" y2="5.3" stroke="#4a6fa8" stroke-width="1"/><line x1="2" y1="7.3" x2="7" y2="7.3" stroke="#4a6fa8" stroke-width="1"/><line x1="2" y1="9.4" x2="7" y2="9.4" stroke="#4a6fa8" stroke-width="1"/><polyline points="9,5 11.5,7.5 14,5" fill="none" stroke="#333" stroke-width="1"/></svg>
<svg style="left:272px;top:535.33px" width="22" height="22"><path d="M9.4,17.4 Q7,20.2 5,19.2 Q3,17.8 4.6,15.2 L15.4,4.6 Q17.3,3 18.5,4.8 Q19.3,6.4 18,7.9 L10.9,15 Q9.5,16.2 8.7,15 Q8.2,13.9 9,13 L13.6,8.4" fill="none" stroke="#353535" stroke-width="1.35" stroke-linecap="round" stroke-linejoin="round"/></svg>
<svg style="left:296px;top:539.33px" width="17" height="17"><path d="M0.6,0.6 H10.6 L15.4,5.4 V15.4 H0.6 Z" fill="#fff" stroke="#9c9c9c" stroke-width="1.1"/><path d="M10.6,0.6 V5.1 H15.4" fill="none" stroke="#9c9c9c" stroke-width="1.1"/><line x1="3" y1="3.5" x2="8" y2="3.5" stroke="#a4a4a4"/><line x1="3" y1="6.5" x2="8" y2="6.5" stroke="#a4a4a4"/><line x1="3" y1="9.5" x2="12.6" y2="9.5" stroke="#a4a4a4"/><line x1="3" y1="12.5" x2="12.6" y2="12.5" stroke="#a4a4a4"/></svg>
<div class="c link" style="left:317px;top:539.44px;width:330px;overflow:hidden">Договір №hjhjhjjh від 04.11.2021 з Новый контрагент</div>
<div class="c" style="left:782px;top:539.44px">hjhjhjjh</div>
<div class="c" style="left:931px;top:539.44px">04.11.2021</div>
<div class="c" style="left:1341px;top:539.44px">Нетиповий</div>
<div class="rl" style="top:588.79px"></div>
<div class="a" style="left:217px;top:565.17px;width:18px;height:19px;border-radius:4px;background:#eceef1"></div>
<div class="a" style="left:219px;top:567.67px;width:14px;height:14px;border-radius:2px;background:#fff;border:1px solid #c8c8c8"></div>
<svg style="left:254px;top:568.76px" width="16" height="13"><rect x="0.5" y="0.5" width="15" height="12" fill="#fff" stroke="#8e8e8e" stroke-width="1"/><line x1="2" y1="3.3" x2="7" y2="3.3" stroke="#4a6fa8" stroke-width="1"/><line x1="2" y1="5.3" x2="7" y2="5.3" stroke="#4a6fa8" stroke-width="1"/><line x1="2" y1="7.3" x2="7" y2="7.3" stroke="#4a6fa8" stroke-width="1"/><line x1="2" y1="9.4" x2="7" y2="9.4" stroke="#4a6fa8" stroke-width="1"/><polyline points="9,5 11.5,7.5 14,5" fill="none" stroke="#333" stroke-width="1"/></svg>
<svg style="left:272px;top:563.56px" width="22" height="22"><path d="M9.4,17.4 Q7,20.2 5,19.2 Q3,17.8 4.6,15.2 L15.4,4.6 Q17.3,3 18.5,4.8 Q19.3,6.4 18,7.9 L10.9,15 Q9.5,16.2 8.7,15 Q8.2,13.9 9,13 L13.6,8.4" fill="none" stroke="#353535" stroke-width="1.35" stroke-linecap="round" stroke-linejoin="round"/></svg>
<svg style="left:296px;top:567.56px" width="17" height="17"><path d="M0.6,0.6 H10.6 L15.4,5.4 V15.4 H0.6 Z" fill="#fff" stroke="#9c9c9c" stroke-width="1.1"/><path d="M10.6,0.6 V5.1 H15.4" fill="none" stroke="#9c9c9c" stroke-width="1.1"/><line x1="3" y1="3.5" x2="8" y2="3.5" stroke="#a4a4a4"/><line x1="3" y1="6.5" x2="8" y2="6.5" stroke="#a4a4a4"/><line x1="3" y1="9.5" x2="12.6" y2="9.5" stroke="#a4a4a4"/><line x1="3" y1="12.5" x2="12.6" y2="12.5" stroke="#a4a4a4"/></svg>
<div class="c link" style="left:317px;top:567.67px;width:330px;overflow:hidden">Договір №П-000119 від 29.10.2021 з Новый контрагент</div>
<div class="c" style="left:782px;top:567.67px">П-000119</div>
<div class="c" style="left:931px;top:567.67px">29.10.2021</div>
<div class="c" style="left:1130px;top:567.67px">05.11.2021</div>
<div class="c" style="left:1341px;top:567.67px">Нетиповий</div>
<div class="rl" style="top:617.02px"></div>
<div class="a" style="left:217px;top:593.40px;width:18px;height:19px;border-radius:4px;background:#eceef1"></div>
<div class="a" style="left:219px;top:595.90px;width:14px;height:14px;border-radius:2px;background:#fff;border:1px solid #c8c8c8"></div>
<svg style="left:254px;top:596.99px" width="16" height="13"><rect x="0.5" y="0.5" width="15" height="12" fill="#fff" stroke="#8e8e8e" stroke-width="1"/><line x1="2" y1="3.3" x2="7" y2="3.3" stroke="#4a6fa8" stroke-width="1"/><line x1="2" y1="5.3" x2="7" y2="5.3" stroke="#4a6fa8" stroke-width="1"/><line x1="2" y1="7.3" x2="7" y2="7.3" stroke="#4a6fa8" stroke-width="1"/><line x1="2" y1="9.4" x2="7" y2="9.4" stroke="#4a6fa8" stroke-width="1"/><polyline points="9,5 11.5,7.5 14,5" fill="none" stroke="#333" stroke-width="1"/></svg>
<svg style="left:272px;top:591.79px" width="22" height="22"><path d="M9.4,17.4 Q7,20.2 5,19.2 Q3,17.8 4.6,15.2 L15.4,4.6 Q17.3,3 18.5,4.8 Q19.3,6.4 18,7.9 L10.9,15 Q9.5,16.2 8.7,15 Q8.2,13.9 9,13 L13.6,8.4" fill="none" stroke="#353535" stroke-width="1.35" stroke-linecap="round" stroke-linejoin="round"/></svg>
<svg style="left:296px;top:595.79px" width="17" height="17"><path d="M0.6,0.6 H10.6 L15.4,5.4 V15.4 H0.6 Z" fill="#fff" stroke="#9c9c9c" stroke-width="1.1"/><path d="M10.6,0.6 V5.1 H15.4" fill="none" stroke="#9c9c9c" stroke-width="1.1"/><line x1="3" y1="3.5" x2="8" y2="3.5" stroke="#a4a4a4"/><line x1="3" y1="6.5" x2="8" y2="6.5" stroke="#a4a4a4"/><line x1="3" y1="9.5" x2="12.6" y2="9.5" stroke="#a4a4a4"/><line x1="3" y1="12.5" x2="12.6" y2="12.5" stroke="#a4a4a4"/></svg>
<div class="c link" style="left:317px;top:595.90px;width:330px;overflow:hidden">Договір №лдлддл від 28.10.2021 з Новый контрагент</div>
<div class="c" style="left:782px;top:595.90px">лдлддл</div>
<div class="c" style="left:931px;top:595.90px">28.10.2021</div>
<div class="c" style="left:1341px;top:595.90px">Типовий</div>
<div class="rl" style="top:645.25px"></div>
<div class="a" style="left:217px;top:621.63px;width:18px;height:19px;border-radius:4px;background:#eceef1"></div>
<div class="a" style="left:219px;top:624.13px;width:14px;height:14px;border-radius:2px;background:#fff;border:1px solid #c8c8c8"></div>
<svg style="left:254px;top:625.22px" width="16" height="13"><rect x="0.5" y="0.5" width="15" height="12" fill="#fff" stroke="#8e8e8e" stroke-width="1"/><line x1="2" y1="3.3" x2="7" y2="3.3" stroke="#4a6fa8" stroke-width="1"/><line x1="2" y1="5.3" x2="7" y2="5.3" stroke="#4a6fa8" stroke-width="1"/><line x1="2" y1="7.3" x2="7" y2="7.3" stroke="#4a6fa8" stroke-width="1"/><line x1="2" y1="9.4" x2="7" y2="9.4" stroke="#4a6fa8" stroke-width="1"/><polyline points="9,5 11.5,7.5 14,5" fill="none" stroke="#333" stroke-width="1"/></svg>
<svg style="left:272px;top:620.02px" width="22" height="22"><path d="M9.4,17.4 Q7,20.2 5,19.2 Q3,17.8 4.6,15.2 L15.4,4.6 Q17.3,3 18.5,4.8 Q19.3,6.4 18,7.9 L10.9,15 Q9.5,16.2 8.7,15 Q8.2,13.9 9,13 L13.6,8.4" fill="none" stroke="#353535" stroke-width="1.35" stroke-linecap="round" stroke-linejoin="round"/></svg>
<svg style="left:296px;top:624.02px" width="17" height="17"><path d="M0.6,0.6 H10.6 L15.4,5.4 V15.4 H0.6 Z" fill="#fff" stroke="#9c9c9c" stroke-width="1.1"/><path d="M10.6,0.6 V5.1 H15.4" fill="none" stroke="#9c9c9c" stroke-width="1.1"/><line x1="3" y1="3.5" x2="8" y2="3.5" stroke="#a4a4a4"/><line x1="3" y1="6.5" x2="8" y2="6.5" stroke="#a4a4a4"/><line x1="3" y1="9.5" x2="12.6" y2="9.5" stroke="#a4a4a4"/><line x1="3" y1="12.5" x2="12.6" y2="12.5" stroke="#a4a4a4"/></svg>
<div class="c link" style="left:317px;top:624.13px;width:330px;overflow:hidden">Договір №П-000115 від 22.10.2021 з Новый контрагент</div>
<div class="c" style="left:782px;top:624.13px">П-000115</div>
<div class="c" style="left:931px;top:624.13px">22.10.2021</div>
<div class="c" style="left:1341px;top:624.13px">Типовий</div>
<div class="rl" style="top:673.48px"></div>
<div class="a" style="left:217px;top:649.87px;width:18px;height:19px;border-radius:4px;background:#eceef1"></div>
<div class="a" style="left:219px;top:652.37px;width:14px;height:14px;border-radius:2px;background:#fff;border:1px solid #c8c8c8"></div>
<svg style="left:254px;top:653.45px" width="16" height="13"><rect x="0.5" y="0.5" width="15" height="12" fill="#fff" stroke="#8e8e8e" stroke-width="1"/><line x1="2" y1="3.3" x2="7" y2="3.3" stroke="#4a6fa8" stroke-width="1"/><line x1="2" y1="5.3" x2="7" y2="5.3" stroke="#4a6fa8" stroke-width="1"/><line x1="2" y1="7.3" x2="7" y2="7.3" stroke="#4a6fa8" stroke-width="1"/><line x1="2" y1="9.4" x2="7" y2="9.4" stroke="#4a6fa8" stroke-width="1"/><polyline points="9,5 11.5,7.5 14,5" fill="none" stroke="#333" stroke-width="1"/></svg>
<svg style="left:272px;top:648.25px" width="22" height="22"><path d="M9.4,17.4 Q7,20.2 5,19.2 Q3,17.8 4.6,15.2 L15.4,4.6 Q17.3,3 18.5,4.8 Q19.3,6.4 18,7.9 L10.9,15 Q9.5,16.2 8.7,15 Q8.2,13.9 9,13 L13.6,8.4" fill="none" stroke="#353535" stroke-width="1.35" stroke-linecap="round" stroke-linejoin="round"/></svg>
<svg style="left:296px;top:652.25px" width="17" height="17"><path d="M0.6,0.6 H10.6 L15.4,5.4 V15.4 H0.6 Z" fill="#fff" stroke="#9c9c9c" stroke-width="1.1"/><path d="M10.6,0.6 V5.1 H15.4" fill="none" stroke="#9c9c9c" stroke-width="1.1"/><line x1="3" y1="3.5" x2="8" y2="3.5" stroke="#a4a4a4"/><line x1="3" y1="6.5" x2="8" y2="6.5" stroke="#a4a4a4"/><line x1="3" y1="9.5" x2="12.6" y2="9.5" stroke="#a4a4a4"/><line x1="3" y1="12.5" x2="12.6" y2="12.5" stroke="#a4a4a4"/></svg>
<div class="c link" style="left:317px;top:652.37px;width:330px;overflow:hidden">Договір №П-000114 від 21.10.2021 з Новый контрагент</div>
<div class="c" style="left:782px;top:652.37px">П-000114</div>
<div class="c" style="left:931px;top:652.37px">21.10.2021</div>
<div class="c" style="left:1341px;top:652.37px">Типовий</div>
<div class="rl" style="top:701.71px"></div>
<div class="a" style="left:217px;top:678.10px;width:18px;height:19px;border-radius:4px;background:#eceef1"></div>
<div class="a" style="left:219px;top:680.60px;width:14px;height:14px;border-radius:2px;background:#fff;border:1px solid #c8c8c8"></div>
<svg style="left:254px;top:681.68px" width="16" height="13"><rect x="0.5" y="0.5" width="15" height="12" fill="#fff" stroke="#8e8e8e" stroke-width="1"/><line x1="2" y1="3.3" x2="7" y2="3.3" stroke="#4a6fa8" stroke-width="1"/><line x1="2" y1="5.3" x2="7" y2="5.3" stroke="#4a6fa8" stroke-width="1"/><line x1="2" y1="7.3" x2="7" y2="7.3" stroke="#4a6fa8" stroke-width="1"/><line x1="2" y1="9.4" x2="7" y2="9.4" stroke="#4a6fa8" stroke-width="1"/><polyline points="9,5 11.5,7.5 14,5" fill="none" stroke="#333" stroke-width="1"/></svg>
<svg style="left:272px;top:676.48px" width="22" height="22"><path d="M9.4,17.4 Q7,20.2 5,19.2 Q3,17.8 4.6,15.2 L15.4,4.6 Q17.3,3 18.5,4.8 Q19.3,6.4 18,7.9 L10.9,15 Q9.5,16.2 8.7,15 Q8.2,13.9 9,13 L13.6,8.4" fill="none" stroke="#353535" stroke-width="1.35" stroke-linecap="round" stroke-linejoin="round"/></svg>
<svg style="left:296px;top:680.48px" width="17" height="17"><path d="M0.6,0.6 H10.6 L15.4,5.4 V15.4 H0.6 Z" fill="#fff" stroke="#9c9c9c" stroke-width="1.1"/><path d="M10.6,0.6 V5.1 H15.4" fill="none" stroke="#9c9c9c" stroke-width="1.1"/><line x1="3" y1="3.5" x2="8" y2="3.5" stroke="#a4a4a4"/><line x1="3" y1="6.5" x2="8" y2="6.5" stroke="#a4a4a4"/><line x1="3" y1="9.5" x2="12.6" y2="9.5" stroke="#a4a4a4"/><line x1="3" y1="12.5" x2="12.6" y2="12.5" stroke="#a4a4a4"/></svg>
<div class="c link" style="left:317px;top:680.60px;width:330px;overflow:hidden">Договір №hjjhjh від 20.10.2021 з Новый контрагент</div>
<div class="c" style="left:782px;top:680.60px">hjjhjh</div>
<div class="c" style="left:931px;top:680.60px">20.10.2021</div>
<div class="c" style="left:1341px;top:680.60px">Типовий</div>
<div class="rl" style="top:729.94px"></div>
<div class="a" style="left:217px;top:706.33px;width:18px;height:19px;border-radius:4px;background:#eceef1"></div>
<div class="a" style="left:219px;top:708.83px;width:14px;height:14px;border-radius:2px;background:#fff;border:1px solid #c8c8c8"></div>
<svg style="left:254px;top:709.91px" width="16" height="13"><rect x="0.5" y="0.5" width="15" height="12" fill="#fff" stroke="#8e8e8e" stroke-width="1"/><line x1="2" y1="3.3" x2="7" y2="3.3" stroke="#4a6fa8" stroke-width="1"/><line x1="2" y1="5.3" x2="7" y2="5.3" stroke="#4a6fa8" stroke-width="1"/><line x1="2" y1="7.3" x2="7" y2="7.3" stroke="#4a6fa8" stroke-width="1"/><line x1="2" y1="9.4" x2="7" y2="9.4" stroke="#4a6fa8" stroke-width="1"/><polyline points="9,5 11.5,7.5 14,5" fill="none" stroke="#333" stroke-width="1"/></svg>
<svg style="left:272px;top:704.71px" width="22" height="22"><path d="M9.4,17.4 Q7,20.2 5,19.2 Q3,17.8 4.6,15.2 L15.4,4.6 Q17.3,3 18.5,4.8 Q19.3,6.4 18,7.9 L10.9,15 Q9.5,16.2 8.7,15 Q8.2,13.9 9,13 L13.6,8.4" fill="none" stroke="#353535" stroke-width="1.35" stroke-linecap="round" stroke-linejoin="round"/></svg>
<svg style="left:296px;top:708.71px" width="17" height="17"><path d="M0.6,0.6 H10.6 L15.4,5.4 V15.4 H0.6 Z" fill="#fff" stroke="#9c9c9c" stroke-width="1.1"/><path d="M10.6,0.6 V5.1 H15.4" fill="none" stroke="#9c9c9c" stroke-width="1.1"/><line x1="3" y1="3.5" x2="8" y2="3.5" stroke="#a4a4a4"/><line x1="3" y1="6.5" x2="8" y2="6.5" stroke="#a4a4a4"/><line x1="3" y1="9.5" x2="12.6" y2="9.5" stroke="#a4a4a4"/><line x1="3" y1="12.5" x2="12.6" y2="12.5" stroke="#a4a4a4"/></svg>
<div class="c link" style="left:317px;top:708.83px;width:330px;overflow:hidden">Договір №hjhjhjjh від 14.10.2021 з Новый контрагент</div>
<div class="c" style="left:782px;top:708.83px">hjhjhjjh</div>
<div class="c" style="left:931px;top:708.83px">14.10.2021</div>
<div class="c" style="left:1341px;top:708.83px">Типовий</div>
<div class="rl" style="top:758.17px"></div>
<div class="a" style="left:217px;top:734.56px;width:18px;height:19px;border-radius:4px;background:#eceef1"></div>
<div class="a" style="left:219px;top:737.06px;width:14px;height:14px;border-radius:2px;background:#fff;border:1px solid #c8c8c8"></div>
<svg style="left:254px;top:738.14px" width="16" height="13"><rect x="0.5" y="0.5" width="15" height="12" fill="#fff" stroke="#8e8e8e" stroke-width="1"/><line x1="2" y1="3.3" x2="7" y2="3.3" stroke="#4a6fa8" stroke-width="1"/><line x1="2" y1="5.3" x2="7" y2="5.3" stroke="#4a6fa8" stroke-width="1"/><line x1="2" y1="7.3" x2="7" y2="7.3" stroke="#4a6fa8" stroke-width="1"/><line x1="2" y1="9.4" x2="7" y2="9.4" stroke="#4a6fa8" stroke-width="1"/><polyline points="9,5 11.5,7.5 14,5" fill="none" stroke="#333" stroke-width="1"/></svg>
<svg style="left:272px;top:732.94px" width="22" height="22"><path d="M9.4,17.4 Q7,20.2 5,19.2 Q3,17.8 4.6,15.2 L15.4,4.6 Q17.3,3 18.5,4.8 Q19.3,6.4 18,7.9 L10.9,15 Q9.5,16.2 8.7,15 Q8.2,13.9 9,13 L13.6,8.4" fill="none" stroke="#353535" stroke-width="1.35" stroke-linecap="round" stroke-linejoin="round"/></svg>
<svg style="left:296px;top:736.94px" width="17" height="17"><path d="M0.6,0.6 H10.6 L15.4,5.4 V15.4 H0.6 Z" fill="#fff" stroke="#9c9c9c" stroke-width="1.1"/><path d="M10.6,0.6 V5.1 H15.4" fill="none" stroke="#9c9c9c" stroke-width="1.1"/><line x1="3" y1="3.5" x2="8" y2="3.5" stroke="#a4a4a4"/><line x1="3" y1="6.5" x2="8" y2="6.5" stroke="#a4a4a4"/><line x1="3" y1="9.5" x2="12.6" y2="9.5" stroke="#a4a4a4"/><line x1="3" y1="12.5" x2="12.6" y2="12.5" stroke="#a4a4a4"/></svg>
<div class="c link" style="left:317px;top:737.06px;width:330px;overflow:hidden">Договір №П-000111 від 05.10.2021 з Новый контрагент</div>
<div class="c" style="left:782px;top:737.06px">П-000111</div>
<div class="c" style="left:931px;top:737.06px">05.10.2021</div>
<div class="c" style="left:1341px;top:737.06px">Нетиповий</div>
<div class="rl" style="top:786.40px"></div>
<div class="a" style="left:217px;top:762.79px;width:18px;height:19px;border-radius:4px;background:#eceef1"></div>
<div class="a" style="left:219px;top:765.29px;width:14px;height:14px;border-radius:2px;background:#fff;border:1px solid #c8c8c8"></div>
<svg style="left:254px;top:766.37px" width="16" height="13"><rect x="0.5" y="0.5" width="15" height="12" fill="#fff" stroke="#8e8e8e" stroke-width="1"/><line x1="2" y1="3.3" x2="7" y2="3.3" stroke="#4a6fa8" stroke-width="1"/><line x1="2" y1="5.3" x2="7" y2="5.3" stroke="#4a6fa8" stroke-width="1"/><line x1="2" y1="7.3" x2="7" y2="7.3" stroke="#4a6fa8" stroke-width="1"/><line x1="2" y1="9.4" x2="7" y2="9.4" stroke="#4a6fa8" stroke-width="1"/><polyline points="9,5 11.5,7.5 14,5" fill="none" stroke="#333" stroke-width="1"/></svg>
<svg style="left:272px;top:761.17px" width="22" height="22"><path d="M9.4,17.4 Q7,20.2 5,19.2 Q3,17.8 4.6,15.2 L15.4,4.6 Q17.3,3 18.5,4.8 Q19.3,6.4 18,7.9 L10.9,15 Q9.5,16.2 8.7,15 Q8.2,13.9 9,13 L13.6,8.4" fill="none" stroke="#353535" stroke-width="1.35" stroke-linecap="round" stroke-linejoin="round"/></svg>
<svg style="left:296px;top:765.17px" width="17" height="17"><path d="M0.6,0.6 H10.6 L15.4,5.4 V15.4 H0.6 Z" fill="#fff" stroke="#9c9c9c" stroke-width="1.1"/><path d="M10.6,0.6 V5.1 H15.4" fill="none" stroke="#9c9c9c" stroke-width="1.1"/><line x1="3" y1="3.5" x2="8" y2="3.5" stroke="#a4a4a4"/><line x1="3" y1="6.5" x2="8" y2="6.5" stroke="#a4a4a4"/><line x1="3" y1="9.5" x2="12.6" y2="9.5" stroke="#a4a4a4"/><line x1="3" y1="12.5" x2="12.6" y2="12.5" stroke="#a4a4a4"/></svg>
<div class="c link" style="left:317px;top:765.29px;width:330px;overflow:hidden">Договір №П-000111 від 04.10.2021 з Новый контрагент</div>
<div class="c" style="left:782px;top:765.29px">П-000111</div>
<div class="c" style="left:931px;top:765.29px">04.10.2021</div>
<div class="c" style="left:1341px;top:765.29px">Типовий</div>
</body></html>
